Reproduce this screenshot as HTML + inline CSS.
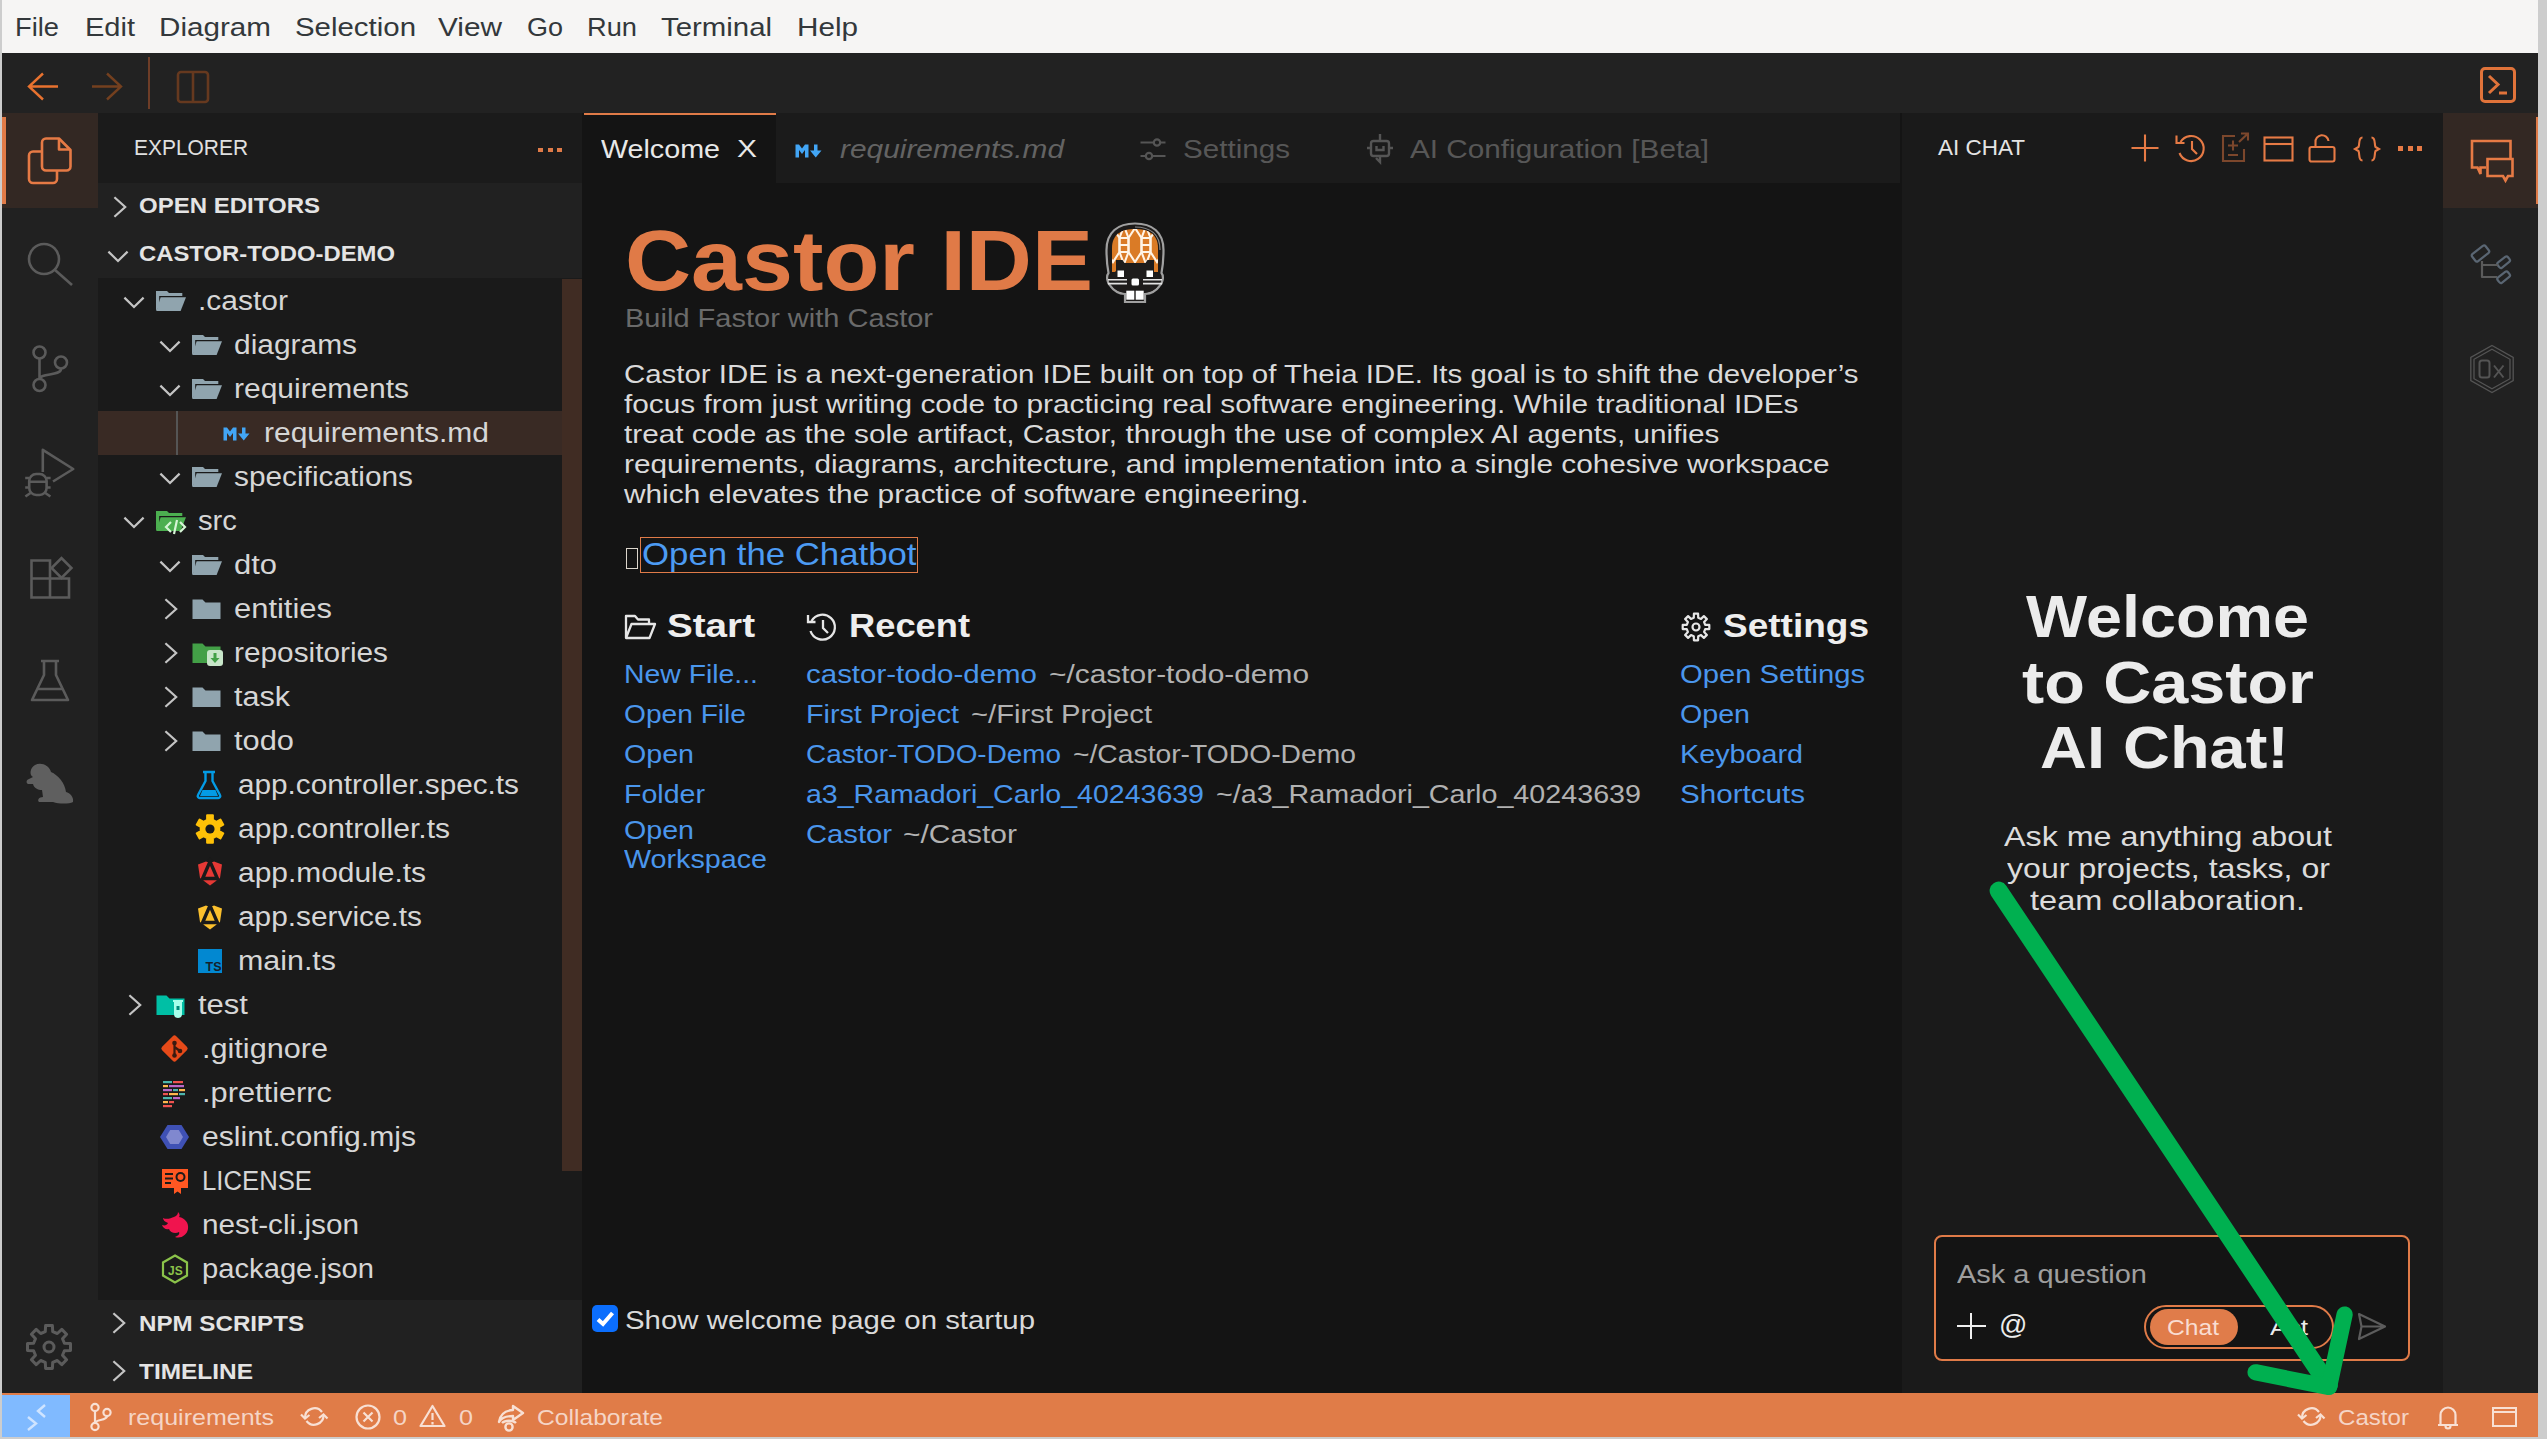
<!DOCTYPE html>
<html><head><meta charset="utf-8"><title>Castor IDE</title>
<style>
html,body{margin:0;padding:0;background:#141414;}
body{width:2547px;height:1439px;position:relative;overflow:hidden;font-family:"Liberation Sans",sans-serif;}
body>div,body>svg,body>span{position:absolute;}
.t{white-space:nowrap;transform-origin:0 50%;display:block;}
svg{overflow:visible;}
</style></head><body>
<div style="left:0px;top:0px;width:2547px;height:1439px;background:#cdcdcd;"></div>
<div style="left:2px;top:0px;width:2536px;height:53px;background:#f6f5f4;"></div>
<div style="left:2px;top:53px;width:2536px;height:60px;background:#222222;"></div>
<div style="left:2px;top:113px;width:96px;height:1280px;background:#212121;"></div>
<div style="left:98px;top:113px;width:484px;height:1280px;background:#1a1a1a;"></div>
<div style="left:582px;top:113px;width:1320px;height:1280px;background:#141414;"></div>
<div style="left:1902px;top:113px;width:541px;height:1280px;background:#1a1a1a;"></div>
<div style="left:2443px;top:113px;width:95px;height:1280px;background:#212121;"></div>
<div style="left:2px;top:1393px;width:2536px;height:44px;background:#e07c48;"></div>
<span class="t" style="left:15px;top:15.01px;font-size:25.5px;line-height:25.5px;color:#33383b;transform:scaleX(1.0707);">File</span>
<span class="t" style="left:85px;top:15.01px;font-size:25.5px;line-height:25.5px;color:#33383b;transform:scaleX(1.1376);">Edit</span>
<span class="t" style="left:159px;top:15.01px;font-size:25.5px;line-height:25.5px;color:#33383b;transform:scaleX(1.1621);">Diagram</span>
<span class="t" style="left:295px;top:15.01px;font-size:25.5px;line-height:25.5px;color:#33383b;transform:scaleX(1.1534);">Selection</span>
<span class="t" style="left:438px;top:15.01px;font-size:25.5px;line-height:25.5px;color:#33383b;transform:scaleX(1.1676);">View</span>
<span class="t" style="left:527px;top:15.01px;font-size:25.5px;line-height:25.5px;color:#33383b;transform:scaleX(1.0579);">Go</span>
<span class="t" style="left:587px;top:15.01px;font-size:25.5px;line-height:25.5px;color:#33383b;transform:scaleX(1.0688);">Run</span>
<span class="t" style="left:661px;top:15.01px;font-size:25.5px;line-height:25.5px;color:#33383b;transform:scaleX(1.1518);">Terminal</span>
<span class="t" style="left:797px;top:15.01px;font-size:25.5px;line-height:25.5px;color:#33383b;transform:scaleX(1.1629);">Help</span>
<svg style="left:26px;top:70px;" width="34" height="32" viewBox="0 0 34 32"><path d="M17 3.5 L3 16.5 L17 29.5 M3.5 16.5 H32" fill="none" stroke="#e8722f" stroke-width="2.4"/></svg>
<svg style="left:90px;top:70px;" width="34" height="32" viewBox="0 0 34 32"><path d="M17 3.5 L31 16.5 L17 29.5 M30.5 16.5 H2" fill="none" stroke="#74401f" stroke-width="2.4"/></svg>
<div style="left:148px;top:57px;width:2px;height:52px;background:#6e3d27;"></div>
<svg style="left:176px;top:70px;" width="34" height="34" viewBox="0 0 34 34"><rect x="2" y="2" width="30" height="30" rx="3" fill="none" stroke="#66391f" stroke-width="2.6"/><path d="M17 2 V32" stroke="#66391f" stroke-width="2.6"/></svg>
<svg style="left:2479px;top:66px;" width="38" height="38" viewBox="0 0 38 38"><rect x="2.5" y="2.5" width="33" height="33" rx="3.5" fill="none" stroke="#e0733a" stroke-width="3"/><path d="M10 10 L19 18.5 L10 27 M20 27 H28" fill="none" stroke="#e0733a" stroke-width="3"/></svg>
<div style="left:2px;top:113px;width:96px;height:95px;background:#332823;"></div>
<div style="left:2px;top:117px;width:4px;height:87px;background:#e07b48;"></div>
<div style="left:2443px;top:113px;width:95px;height:95px;background:#332823;"></div>
<div style="left:2535.5px;top:117px;width:2.5px;height:87px;background:#e07b48;"></div>
<svg style="left:26px;top:135px;" width="48" height="52" viewBox="0 0 48 52"><g fill="none" stroke="#e67a45" stroke-width="2.6" stroke-linejoin="round"><path d="M16 16.5 H7 a4 4 0 0 0 -4 4 V44 a4 4 0 0 0 4 4 H27 a4 4 0 0 0 4 -4 V36"/><path d="M20 3.5 H33 L44.5 15 V31.5 a4 4 0 0 1 -4 4 H20 a4 4 0 0 1 -4 -4 V7.5 a4 4 0 0 1 4 -4 Z"/><path d="M33 4 V14.5 H44"/></g></svg>
<svg style="left:26px;top:241px;" width="48" height="48" viewBox="0 0 48 48"><g fill="none" stroke="#5b5b5b" stroke-width="2.6"><circle cx="18" cy="18" r="15"/><path d="M29 29 L46 44"/></g></svg>
<svg style="left:26px;top:343px;" width="48" height="52" viewBox="0 0 48 52"><g fill="none" stroke="#5b5b5b" stroke-width="2.6"><circle cx="13.5" cy="9.5" r="6"/><circle cx="35" cy="19.5" r="6"/><circle cx="13.5" cy="42" r="6"/><path d="M13.5 16 V36 M35 26 C35 33 14 30 13.5 36"/></g></svg>
<svg style="left:26px;top:448px;" width="50" height="54" viewBox="0 0 50 54"><g fill="none" stroke="#5b5b5b" stroke-width="2.6" stroke-linejoin="round"><path d="M16.8 24 V1.8 L47.2 21 L27 33.5"/><rect x="3.2" y="26" width="17.4" height="21" rx="7"/><path d="M3.2 33.7 H20.6 M-0.8 30 H3.5 M20.4 30 H24.6 M-0.8 39.5 H3.2 M20.6 39.5 H24.6 M-0.6 48.5 L4.5 45 M24.4 48.5 L19.3 45"/></g></svg>
<svg style="left:28px;top:555px;" width="46" height="46" viewBox="0 0 46 46"><g fill="none" stroke="#5b5b5b" stroke-width="2.6"><path d="M3.5 5.5 H22 V23.5 H41 V42.5 H3.5 Z M3.5 23.5 H22 V42.5"/><rect x="26.5" y="6" width="14" height="14" transform="rotate(45 33.5 13)"/></g></svg>
<svg style="left:29px;top:658px;" width="42" height="46" viewBox="0 0 42 46"><g fill="none" stroke="#5b5b5b" stroke-width="2.6" stroke-linejoin="round"><path d="M12 3 H30 M15 3 V17 L3 42 H39 L27 17 V3 M8.5 31 H33.5"/></g></svg>
<svg style="left:25px;top:763px;" width="50" height="42" viewBox="0 0 50 42"><path d="M10 2 C16 -1 24 2 26 9 C33 12 40 20 41 29 C45 30 49 34 48 39 C44 41 34 41 28 39 L14 39 C12 37 14 34 18 34 L17 27 C13 27 9 25 8 21 L3 21 C1 20 1 17 4 16 L8 14 C4 12 5 5 10 2 Z" fill="#5f5f5f"/></svg>
<svg style="left:25px;top:1323px;" width="48" height="48" viewBox="0 0 48 48"><path d="M45.5 20.6 L45.5 27.4 L39.4 27.7 L37.5 32.3 L41.6 36.8 L36.8 41.6 L32.3 37.5 L27.7 39.4 L27.4 45.5 L20.6 45.5 L20.3 39.4 L15.7 37.5 L11.2 41.6 L6.4 36.8 L10.5 32.3 L8.6 27.7 L2.5 27.4 L2.5 20.6 L8.6 20.3 L10.5 15.7 L6.4 11.2 L11.2 6.4 L15.7 10.5 L20.3 8.6 L20.6 2.5 L27.4 2.5 L27.7 8.6 L32.3 10.5 L36.8 6.4 L41.6 11.2 L37.5 15.7 L39.4 20.3 Z" fill="none" stroke="#5b5b5b" stroke-width="3" stroke-linejoin="round"/><circle cx="24" cy="24" r="5" fill="none" stroke="#5b5b5b" stroke-width="3"/></svg>
<svg style="left:2468px;top:137px;" width="50" height="46" viewBox="0 0 50 46"><g fill="none" stroke="#e67a45" stroke-width="2.6" stroke-linejoin="miter"><path d="M42.5 21 V4 H4 V30.5 H9.5 L12.5 37 V30.5 H18"/><path d="M19.5 22 H44.5 V39 H40 L37.5 43.5 L35 39 H19.5 Z"/></g></svg>
<svg style="left:2468px;top:243px;" width="48" height="44" viewBox="0 0 48 44"><g fill="none" stroke="#5a6673" stroke-width="2.2" stroke-linejoin="round"><rect x="4" y="6" width="17" height="9" rx="2" transform="rotate(-38 12.5 10.5)"/><rect x="29" y="16" width="13" height="6.5" rx="2" transform="rotate(-38 35.5 19)"/><rect x="29" y="31" width="13" height="6.5" rx="2" transform="rotate(-38 35.5 34)"/><path d="M14 18 V34 H29 M14 22 H30" stroke="#5b5b5b"/></g></svg>
<svg style="left:2468px;top:344px;" width="48" height="50" viewBox="0 0 48 50"><g fill="none" stroke="#545454" stroke-width="1.3"><path d="M24 1.5 L45.2 13.4 V36.6 L24 48.5 L2.8 36.6 V13.4 Z"/><path d="M24 5.2 L42 15.3 V34.7 L24 44.8 L6 34.7 V15.3 Z"/><rect x="11.5" y="16.5" width="10" height="17" rx="2.5" stroke-width="2"/><path d="M26 21.5 L35.5 33.5 M35.5 21.5 L26 33.5" stroke-width="2"/></g></svg>
<div style="left:98px;top:113px;width:484px;height:70px;background:#1b1b1b;"></div>
<span class="t" style="left:134px;top:137.05px;font-size:22.5px;line-height:22.5px;color:#e0e0e0;transform:scaleX(0.9303);">EXPLORER</span>
<div style="left:538.0px;top:148px;width:5px;height:4px;background:#e07b48;"></div>
<div style="left:547.5px;top:148px;width:5px;height:4px;background:#e07b48;"></div>
<div style="left:557.0px;top:148px;width:5px;height:4px;background:#e07b48;"></div>
<div style="left:98px;top:183px;width:484px;height:95px;background:#212121;"></div>
<span class="t" style="left:138.5px;top:195.48px;font-size:22px;line-height:22px;color:#e4e4e4;font-weight:bold;transform:scaleX(1.0913);">OPEN EDITORS</span>
<span class="t" style="left:138.5px;top:242.98px;font-size:22px;line-height:22px;color:#e4e4e4;font-weight:bold;transform:scaleX(1.0834);">CASTOR-TODO-DEMO</span>
<svg style="left:111px;top:194px;" width="18" height="26" viewBox="0 0 18 26"><path d="M3.4 3.2 L14.2 13 L3.4 22.8" fill="none" stroke="#c4c4c4" stroke-width="2.2"/></svg>
<svg style="left:105px;top:248px;" width="26" height="18" viewBox="0 0 26 18"><path d="M3.4 3.6 L13 13 L22.6 3.6" fill="none" stroke="#c4c4c4" stroke-width="2.2"/></svg>
<div style="left:98px;top:1300px;width:484px;height:93px;background:#212121;"></div>
<span class="t" style="left:138.5px;top:1313.48px;font-size:22px;line-height:22px;color:#e4e4e4;font-weight:bold;transform:scaleX(1.0974);">NPM SCRIPTS</span>
<span class="t" style="left:138.5px;top:1361.48px;font-size:22px;line-height:22px;color:#e4e4e4;font-weight:bold;transform:scaleX(1.1103);">TIMELINE</span>
<svg style="left:110px;top:1310px;" width="18" height="26" viewBox="0 0 18 26"><path d="M3.4 3.2 L14.2 13 L3.4 22.8" fill="none" stroke="#c4c4c4" stroke-width="2.2"/></svg>
<svg style="left:110px;top:1358px;" width="18" height="26" viewBox="0 0 18 26"><path d="M3.4 3.2 L14.2 13 L3.4 22.8" fill="none" stroke="#c4c4c4" stroke-width="2.2"/></svg>
<div style="left:98px;top:411px;width:464px;height:44px;background:#392a24;"></div>
<div style="left:562px;top:279px;width:20px;height:892px;background:#402c23;"></div>
<div style="left:176px;top:411px;width:2px;height:44px;background:#555555;"></div>
<span class="t" style="left:198px;top:287.94px;font-size:27px;line-height:27px;color:#d6d6d6;transform:scaleX(1.1107);">.castor</span>
<svg style="left:121px;top:294px;" width="26" height="18" viewBox="0 0 26 18"><path d="M3.4 3.6 L13 13 L22.6 3.6" fill="none" stroke="#c4c4c4" stroke-width="2.2"/></svg>
<svg style="left:156px;top:285px;" width="32" height="32" viewBox="0 0 32 32"><path d="M0 6 H11 L13 8 H26.3 V11 H3.2 V21 L0 26 Z" fill="#90a4ae"/><path d="M4.6 12.2 H30 L24.6 26 H0.4 Z" fill="#90a4ae"/></svg>
<span class="t" style="left:234px;top:331.94px;font-size:27px;line-height:27px;color:#d6d6d6;transform:scaleX(1.1076);">diagrams</span>
<svg style="left:157px;top:338px;" width="26" height="18" viewBox="0 0 26 18"><path d="M3.4 3.6 L13 13 L22.6 3.6" fill="none" stroke="#c4c4c4" stroke-width="2.2"/></svg>
<svg style="left:192px;top:329px;" width="32" height="32" viewBox="0 0 32 32"><path d="M0 6 H11 L13 8 H26.3 V11 H3.2 V21 L0 26 Z" fill="#90a4ae"/><path d="M4.6 12.2 H30 L24.6 26 H0.4 Z" fill="#90a4ae"/></svg>
<span class="t" style="left:234px;top:375.94px;font-size:27px;line-height:27px;color:#d6d6d6;transform:scaleX(1.1106);">requirements</span>
<svg style="left:157px;top:382px;" width="26" height="18" viewBox="0 0 26 18"><path d="M3.4 3.6 L13 13 L22.6 3.6" fill="none" stroke="#c4c4c4" stroke-width="2.2"/></svg>
<svg style="left:192px;top:373px;" width="32" height="32" viewBox="0 0 32 32"><path d="M0 6 H11 L13 8 H26.3 V11 H3.2 V21 L0 26 Z" fill="#90a4ae"/><path d="M4.6 12.2 H30 L24.6 26 H0.4 Z" fill="#90a4ae"/></svg>
<span class="t" style="left:264px;top:419.94px;font-size:27px;line-height:27px;color:#d6d6d6;transform:scaleX(1.1106);">requirements.md</span>
<svg style="left:222px;top:417px;" width="32" height="32" viewBox="0 0 32 32"><path d="M1.5 23.5 V10.5 H5 L8 14.5 L11 10.5 H14.5 V23.5 H11 V16 L8 20 L5 16 V23.5 Z" fill="#42a5f5"/><path d="M20 10.5 H23.5 V16.5 H27.5 L21.75 23.5 L16 16.5 H20 Z" fill="#42a5f5"/></svg>
<span class="t" style="left:234px;top:463.94px;font-size:27px;line-height:27px;color:#d6d6d6;transform:scaleX(1.1043);">specifications</span>
<svg style="left:157px;top:470px;" width="26" height="18" viewBox="0 0 26 18"><path d="M3.4 3.6 L13 13 L22.6 3.6" fill="none" stroke="#c4c4c4" stroke-width="2.2"/></svg>
<svg style="left:192px;top:461px;" width="32" height="32" viewBox="0 0 32 32"><path d="M0 6 H11 L13 8 H26.3 V11 H3.2 V21 L0 26 Z" fill="#90a4ae"/><path d="M4.6 12.2 H30 L24.6 26 H0.4 Z" fill="#90a4ae"/></svg>
<span class="t" style="left:198px;top:507.94px;font-size:27px;line-height:27px;color:#d6d6d6;transform:scaleX(1.0833);">src</span>
<svg style="left:121px;top:514px;" width="26" height="18" viewBox="0 0 26 18"><path d="M3.4 3.6 L13 13 L22.6 3.6" fill="none" stroke="#c4c4c4" stroke-width="2.2"/></svg>
<svg style="left:156px;top:505px;" width="32" height="32" viewBox="0 0 32 32"><path d="M0 6 H11 L13 8 H26.3 V11 H3.2 V21 L0 26 Z" fill="#4caf50"/><path d="M4.6 12.2 H30 L24.6 26 H0.4 Z" fill="#4caf50"/><path d="M15 17 L10 22 L15 27 M24 17 L29 22 L24 27 M21 15 L18 29" fill="none" stroke="#d6f5d6" stroke-width="2.2"/></svg>
<span class="t" style="left:234px;top:551.94px;font-size:27px;line-height:27px;color:#d6d6d6;transform:scaleX(1.1452);">dto</span>
<svg style="left:157px;top:558px;" width="26" height="18" viewBox="0 0 26 18"><path d="M3.4 3.6 L13 13 L22.6 3.6" fill="none" stroke="#c4c4c4" stroke-width="2.2"/></svg>
<svg style="left:192px;top:549px;" width="32" height="32" viewBox="0 0 32 32"><path d="M0 6 H11 L13 8 H26.3 V11 H3.2 V21 L0 26 Z" fill="#90a4ae"/><path d="M4.6 12.2 H30 L24.6 26 H0.4 Z" fill="#90a4ae"/></svg>
<span class="t" style="left:234px;top:595.94px;font-size:27px;line-height:27px;color:#d6d6d6;transform:scaleX(1.1454);">entities</span>
<svg style="left:162px;top:596px;" width="18" height="26" viewBox="0 0 18 26"><path d="M3.4 3.2 L14.2 13 L3.4 22.8" fill="none" stroke="#c4c4c4" stroke-width="2.2"/></svg>
<svg style="left:192px;top:593px;" width="32" height="32" viewBox="0 0 32 32"><path d="M0.5 6.5 H10.5 L13.5 9.5 H28.5 V26 H0.5 Z" fill="#90a4ae"/></svg>
<span class="t" style="left:234px;top:639.94px;font-size:27px;line-height:27px;color:#d6d6d6;transform:scaleX(1.1034);">repositories</span>
<svg style="left:162px;top:640px;" width="18" height="26" viewBox="0 0 18 26"><path d="M3.4 3.2 L14.2 13 L3.4 22.8" fill="none" stroke="#c4c4c4" stroke-width="2.2"/></svg>
<svg style="left:192px;top:637px;" width="32" height="32" viewBox="0 0 32 32"><path d="M0.5 6.5 H10.5 L13.5 9.5 H28.5 V26 H0.5 Z" fill="#43a047"/><rect x="15" y="13" width="16" height="16" rx="3" fill="#c8e6c9"/><path d="M21.5 16 h3 v5 h3 l-4.5 5 l-4.5 -5 h3 Z" fill="#43a047"/></svg>
<span class="t" style="left:234px;top:683.94px;font-size:27px;line-height:27px;color:#d6d6d6;transform:scaleX(1.1306);">task</span>
<svg style="left:162px;top:684px;" width="18" height="26" viewBox="0 0 18 26"><path d="M3.4 3.2 L14.2 13 L3.4 22.8" fill="none" stroke="#c4c4c4" stroke-width="2.2"/></svg>
<svg style="left:192px;top:681px;" width="32" height="32" viewBox="0 0 32 32"><path d="M0.5 6.5 H10.5 L13.5 9.5 H28.5 V26 H0.5 Z" fill="#90a4ae"/></svg>
<span class="t" style="left:234px;top:727.94px;font-size:27px;line-height:27px;color:#d6d6d6;transform:scaleX(1.1415);">todo</span>
<svg style="left:162px;top:728px;" width="18" height="26" viewBox="0 0 18 26"><path d="M3.4 3.2 L14.2 13 L3.4 22.8" fill="none" stroke="#c4c4c4" stroke-width="2.2"/></svg>
<svg style="left:192px;top:725px;" width="32" height="32" viewBox="0 0 32 32"><path d="M0.5 6.5 H10.5 L13.5 9.5 H28.5 V26 H0.5 Z" fill="#90a4ae"/></svg>
<span class="t" style="left:238px;top:771.94px;font-size:27px;line-height:27px;color:#d6d6d6;transform:scaleX(1.1013);">app.controller.spec.ts</span>
<svg style="left:194px;top:769px;" width="32" height="32" viewBox="0 0 32 32"><path d="M9 3 H21 M11.5 3 V12 L4 26 a2 2 0 0 0 2 3 H24 a2 2 0 0 0 2 -3 L18.5 12 V3" fill="none" stroke="#039be5" stroke-width="2.4" stroke-linejoin="round"/><path d="M8.5 21 H21.5 L24 27 H6 Z" fill="#039be5"/></svg>
<span class="t" style="left:238px;top:815.94px;font-size:27px;line-height:27px;color:#d6d6d6;transform:scaleX(1.1122);">app.controller.ts</span>
<svg style="left:194px;top:813px;" width="32" height="32" viewBox="0 0 32 32"><path d="M18.9 29.7 L13.1 29.7 L13.1 25.0 L9.6 23.1 L5.6 25.4 L2.7 20.3 L6.7 18.0 L6.7 14.0 L2.7 11.7 L5.6 6.6 L9.6 8.9 L13.1 7.0 L13.1 2.3 L18.9 2.3 L18.9 7.0 L22.4 8.9 L26.4 6.6 L29.3 11.7 L25.3 14.0 L25.3 18.0 L29.3 20.3 L26.4 25.4 L22.4 23.1 L18.9 25.0 Z" fill="#ffc107" stroke="#ffc107" stroke-width="2" stroke-linejoin="round"/><circle cx="16" cy="16" r="4.6" fill="#1a1a1a"/></svg>
<span class="t" style="left:238px;top:859.94px;font-size:27px;line-height:27px;color:#d6d6d6;transform:scaleX(1.1084);">app.module.ts</span>
<svg style="left:194px;top:857px;" width="32" height="32" viewBox="0 0 32 32"><path d="M16 3 L28 7.5 L26 21 L16 28.5 L6 21 L4 7.5 Z" fill="#e53935"/><path d="M8 23 L16 4.5 L24 23 M9 21.5 H23" fill="none" stroke="#1a1a1a" stroke-width="3.4" stroke-linejoin="miter"/><path d="M16 0 L12 5 H20 Z" fill="#1a1a1a"/></svg>
<span class="t" style="left:238px;top:903.94px;font-size:27px;line-height:27px;color:#d6d6d6;transform:scaleX(1.1046);">app.service.ts</span>
<svg style="left:194px;top:901px;" width="32" height="32" viewBox="0 0 32 32"><path d="M16 3 L28 7.5 L26 21 L16 28.5 L6 21 L4 7.5 Z" fill="#fbc02d"/><path d="M8 23 L16 4.5 L24 23 M9 21.5 H23" fill="none" stroke="#1a1a1a" stroke-width="3.4" stroke-linejoin="miter"/><path d="M16 0 L12 5 H20 Z" fill="#1a1a1a"/></svg>
<span class="t" style="left:238px;top:947.94px;font-size:27px;line-height:27px;color:#d6d6d6;transform:scaleX(1.1260);">main.ts</span>
<svg style="left:194px;top:945px;" width="32" height="32" viewBox="0 0 32 32"><rect x="4" y="4" width="24" height="24" fill="#0288d1"/><text x="11.5" y="26" font-size="12.5" font-weight="bold" fill="#15202b" font-family="Liberation Sans">TS</text></svg>
<span class="t" style="left:198px;top:991.94px;font-size:27px;line-height:27px;color:#d6d6d6;transform:scaleX(1.1486);">test</span>
<svg style="left:126px;top:992px;" width="18" height="26" viewBox="0 0 18 26"><path d="M3.4 3.2 L14.2 13 L3.4 22.8" fill="none" stroke="#c4c4c4" stroke-width="2.2"/></svg>
<svg style="left:156px;top:989px;" width="32" height="32" viewBox="0 0 32 32"><path d="M0.5 6.5 H10.5 L13.5 9.5 H28.5 V26 H0.5 Z" fill="#00bfa5"/><path d="M17 12 H27 M19 12 V25 a3 3 0 0 0 6 0 V12" fill="#a7ffeb" stroke="#a7ffeb" stroke-width="2"/><rect x="20.5" y="17" width="3" height="4" fill="#00897b"/></svg>
<span class="t" style="left:202px;top:1035.94px;font-size:27px;line-height:27px;color:#d6d6d6;transform:scaleX(1.1343);">.gitignore</span>
<svg style="left:159px;top:1033px;" width="32" height="32" viewBox="0 0 32 32"><rect x="5.5" y="5.5" width="20" height="20" rx="2.5" transform="rotate(45 15.5 15.5)" fill="#e64a19"/><path d="M15.5 9 V23 M15.5 14 L21 18" stroke="#3a1a10" stroke-width="2.2" fill="none"/><circle cx="15.5" cy="22.5" r="2.3" fill="#3a1a10"/><circle cx="21" cy="18" r="2.3" fill="#3a1a10"/><circle cx="15.5" cy="10" r="2.3" fill="#3a1a10"/></svg>
<span class="t" style="left:202px;top:1079.94px;font-size:27px;line-height:27px;color:#d6d6d6;transform:scaleX(1.1400);">.prettierrc</span>
<svg style="left:159px;top:1077px;" width="32" height="32" viewBox="0 0 32 32"><rect x="4" y="4" width="9" height="2.2" fill="#4db6ac"/><rect x="14" y="4" width="10" height="2.2" fill="#ef5350"/><rect x="4" y="8" width="5" height="2.2" fill="#ffb74d"/><rect x="10" y="8" width="15" height="2.2" fill="#ba68c8"/><rect x="4" y="12" width="9" height="2.2" fill="#ba68c8"/><rect x="14" y="12" width="5" height="2.2" fill="#4db6ac"/><rect x="20" y="12" width="6" height="2.2" fill="#ffb74d"/><rect x="4" y="16" width="5" height="2.2" fill="#ef5350"/><rect x="10" y="16" width="9" height="2.2" fill="#ffb74d"/><rect x="20" y="16" width="6" height="2.2" fill="#4db6ac"/><rect x="4" y="20" width="9" height="2.2" fill="#4db6ac"/><rect x="14" y="20" width="7" height="2.2" fill="#ba68c8"/><rect x="4" y="24" width="5" height="2.2" fill="#ffb74d"/><rect x="10" y="24" width="5" height="2.2" fill="#ef5350"/><rect x="4" y="28" width="9" height="2.2" fill="#ef5350"/></svg>
<span class="t" style="left:202px;top:1123.94px;font-size:27px;line-height:27px;color:#d6d6d6;transform:scaleX(1.1141);">eslint.config.mjs</span>
<svg style="left:159px;top:1121px;" width="32" height="32" viewBox="0 0 32 32"><path d="M1 16 L8.5 4 H22.5 L30 16 L22.5 28 H8.5 Z" fill="#3f51b5"/><path d="M7 16 L11.2 9 H19.8 L24 16 L19.8 23 H11.2 Z" fill="#8088cf"/></svg>
<span class="t" style="left:202px;top:1167.94px;font-size:27px;line-height:27px;color:#d6d6d6;transform:scaleX(0.9520);">LICENSE</span>
<svg style="left:159px;top:1165px;" width="32" height="32" viewBox="0 0 32 32"><path d="M3 4 H29 V23 H22 V29 L18.5 26.5 L15 29 V23 H3 Z" fill="#ff5722"/><circle cx="21.5" cy="12" r="5" fill="#1a1a1a"/><circle cx="21.5" cy="12" r="3" fill="#ff5722"/><path d="M6 9 H14 M6 13.5 H14 M6 18 H12" stroke="#1a1a1a" stroke-width="2"/></svg>
<span class="t" style="left:202px;top:1211.94px;font-size:27px;line-height:27px;color:#d6d6d6;transform:scaleX(1.1013);">nest-cli.json</span>
<svg style="left:159px;top:1209px;" width="32" height="32" viewBox="0 0 32 32"><path d="M19 3 C21 5 21 7 20 8 C26 9 30 14 29 20 C28 26 22 30 16 28 C19 27 21 25 20 23 C17 25 11 24 10 20 C7 21 4 19 3 16 C6 17 8 16 9 14 C6 13 4 11 4 9 C8 11 12 9 15 8 C17 7 19 6 19 3 Z" fill="#f0144e"/></svg>
<span class="t" style="left:202px;top:1255.94px;font-size:27px;line-height:27px;color:#d6d6d6;transform:scaleX(1.0809);">package.json</span>
<svg style="left:159px;top:1253px;" width="32" height="32" viewBox="0 0 32 32"><path d="M16 2.5 L28 9.5 V22.5 L16 29.5 L4 22.5 V9.5 Z" fill="none" stroke="#8bc34a" stroke-width="2.2"/><text x="9" y="21.5" font-size="12" font-weight="bold" fill="#8bc34a" font-family="Liberation Sans">JS</text></svg>
<div style="left:582px;top:113px;width:1320px;height:70px;background:#1b1b1b;"></div>
<div style="left:582px;top:113px;width:194px;height:70px;background:#141414;"></div>
<div style="left:584px;top:113px;width:192px;height:2px;background:#e07b48;"></div>
<span class="t" style="left:600.5px;top:136.51px;font-size:25.5px;line-height:25.5px;color:#e8e8e8;transform:scaleX(1.1246);">Welcome</span>
<span class="t" style="left:737px;top:137.71px;font-size:23.5px;line-height:23.5px;color:#e8e8e8;transform:scaleX(1.2749);">X</span>
<svg style="left:794px;top:134px;" width="32" height="32" viewBox="0 0 32 32"><path d="M1.5 23.5 V10.5 H5 L8 14.5 L11 10.5 H14.5 V23.5 H11 V16 L8 20 L5 16 V23.5 Z" fill="#42a5f5"/><path d="M20 10.5 H23.5 V16.5 H27.5 L21.75 23.5 L16 16.5 H20 Z" fill="#42a5f5"/></svg>
<span class="t" style="left:840px;top:135.59px;font-size:26px;line-height:26px;color:#636363;font-style:italic;transform:scaleX(1.1483);">requirements.md</span>
<svg style="left:1139px;top:137px;" width="28" height="26" viewBox="0 0 28 26"><g fill="none" stroke="#555555" stroke-width="2.2"><path d="M1.5 5.5 H14.5 M21.5 5.5 H26.5 M1.5 19 H6.5 M13.5 19 H26.5"/><circle cx="18" cy="5.5" r="3.2"/><circle cx="10" cy="19" r="3.2"/></g></svg>
<svg style="left:1366px;top:133px;" width="28" height="32" viewBox="0 0 28 32"><g fill="none" stroke="#555555" stroke-width="2.4"><path d="M14 1 V8 M1 15 H5 M23 15 H27 M14 23 V29 L10 25"/><rect x="5" y="8" width="18" height="15" rx="2.5"/><path d="M10.5 13 V17 H17.5 V13"/></g></svg>
<span class="t" style="left:1183px;top:136.09px;font-size:26px;line-height:26px;color:#575757;transform:scaleX(1.1389);">Settings</span>
<span class="t" style="left:1410px;top:136.09px;font-size:26px;line-height:26px;color:#575757;transform:scaleX(1.1429);">AI Configuration [Beta]</span>
<div style="left:1900px;top:113px;width:2px;height:1280px;background:#141414;"></div>
<span class="t" style="left:625px;top:217.72px;font-size:85.5px;line-height:85.5px;color:#e07a47;font-weight:bold;transform:scaleX(1.0707);">Castor IDE</span>
<svg style="left:1103px;top:222px;" width="64" height="82" viewBox="0 0 64 82"><defs><clipPath id="dome"><path d="M9 50 V26 C9 12 19 7 32 7 C45 7 55 12 55 26 V50 Z"/></clipPath></defs><path d="M32 1.5 C49 1.5 60.5 10 60.5 28 C60.5 36 59.5 46 58.5 51 C61 54 60 61 56.5 64 C53 69 48 71.5 42 72 V80 H22 V72 C16 71.5 11 69 7.5 64 C4 61 3 54 5.5 51 C4.5 46 3.5 36 3.5 28 C3.5 10 15 1.5 32 1.5 Z" fill="#1c1a19" stroke="#a0a0a0" stroke-width="2.2"/><path d="M32 5 C47 5 57 12 57 28" fill="none" stroke="#8a8a8a" stroke-width="1.2"/><g clip-path="url(#dome)"><rect x="0" y="0" width="64" height="52" fill="#da7b26"/><g fill="none" stroke="#fff4e6" stroke-width="2.1"><path d="M10 6 L16.5 16 V30 L10 40 L3.5 30 V16 Z"/><path d="M32 6 L38.5 16 V30 L32 40 L25.5 30 V16 Z"/><path d="M54 6 L60.5 16 V30 L54 40 L47.5 30 V16 Z"/><path d="M16.5 16 H25.5 M16.5 23 H25.5 M16.5 30 H25.5 M21 4 L16.5 16 M21 4 L25.5 16 M16.5 30 L21 42 L25.5 30 M16.5 16 V30 M25.5 16 V30"/><path d="M38.5 16 H47.5 M38.5 23 H47.5 M38.5 30 H47.5 M43 4 L38.5 16 M43 4 L47.5 16 M38.5 30 L43 42 L47.5 30 M38.5 16 V30 M47.5 16 V30"/></g></g><path d="M13 51 V38 H19.5 L21.5 41 H42.5 L44.5 38 H51 V51 C58 53 58 61 54 65 C50 70 44 71 32 71 C20 71 14 70 10 65 C6 61 6 53 13 49 Z" fill="#1e1c1b"/><rect x="14.5" y="48.5" width="6.5" height="6.5" fill="#ffffff"/><rect x="43.5" y="48.5" width="6.5" height="6.5" fill="#ffffff"/><rect x="28.5" y="56.5" width="7.5" height="7" rx="1.5" fill="#ffffff"/><path d="M5 57.8 H24 M5 61.6 H24 M40 57.8 H59 M40 61.6 H59" stroke="#e4e4e4" stroke-width="1.6"/><rect x="23.3" y="68.7" width="8" height="9" fill="#ffffff"/><rect x="32.7" y="68.7" width="8" height="9" fill="#ffffff"/></svg>
<span class="t" style="left:625px;top:304.59px;font-size:26px;line-height:26px;color:#6a6a6a;transform:scaleX(1.1160);">Build Fastor with Castor</span>
<span class="t" style="left:624.3px;top:360.79px;font-size:26px;line-height:26px;color:#dadada;transform:scaleX(1.1314);">Castor IDE is a next-generation IDE built on top of Theia IDE. Its goal is to shift the developer’s</span>
<span class="t" style="left:624.3px;top:390.84px;font-size:26px;line-height:26px;color:#dadada;transform:scaleX(1.1463);">focus from just writing code to practicing real software engineering. While traditional IDEs</span>
<span class="t" style="left:624.3px;top:420.89px;font-size:26px;line-height:26px;color:#dadada;transform:scaleX(1.1450);">treat code as the sole artifact, Castor, through the use of complex AI agents, unifies</span>
<span class="t" style="left:624.3px;top:450.94px;font-size:26px;line-height:26px;color:#dadada;transform:scaleX(1.1458);">requirements, diagrams, architecture, and implementation into a single cohesive workspace</span>
<span class="t" style="left:624.3px;top:480.99px;font-size:26px;line-height:26px;color:#dadada;transform:scaleX(1.1467);">which elevates the practice of software engineering.</span>
<div style="left:625.5px;top:547.5px;width:12.5px;height:21px;background:transparent;border:1.5px solid #dcd6cc;box-sizing:border-box;"></div>
<div style="left:639.7px;top:537px;width:278.6px;height:36px;background:transparent;border:1.6px solid #e07b48;box-sizing:border-box;"></div>
<span class="t" style="left:641.5px;top:538.94px;font-size:31.5px;line-height:31.5px;color:#4c9bf3;transform:scaleX(1.1038);">Open the Chatbot</span>
<svg style="left:624px;top:613px;" width="32" height="28" viewBox="0 0 32 28"><path d="M2 25 V3 H11 L14 6.5 H25 V11 M2 25 L7.5 11 H31 L25.5 25 Z" fill="none" stroke="#e6e6e6" stroke-width="2.3" stroke-linejoin="round"/></svg>
<svg style="left:806px;top:612px;" width="32" height="30" viewBox="0 0 32 30"><g fill="none" stroke="#e6e6e6" stroke-width="2.3"><path d="M5.5 9 A12.5 12.5 0 1 1 4.5 19"/><path d="M2 3 V10 H9.5 M17 8 V16 L22 21"/></g></svg>
<svg style="left:1681px;top:612px;" width="30" height="30" viewBox="0 0 30 30"><path d="M28.3 12.9 L28.3 17.1 L24.2 17.2 L23.1 20.0 L25.9 22.9 L22.9 25.9 L20.0 23.1 L17.2 24.2 L17.1 28.3 L12.9 28.3 L12.8 24.2 L10.0 23.1 L7.1 25.9 L4.1 22.9 L6.9 20.0 L5.8 17.2 L1.7 17.1 L1.7 12.9 L5.8 12.8 L6.9 10.0 L4.1 7.1 L7.1 4.1 L10.0 6.9 L12.8 5.8 L12.9 1.7 L17.1 1.7 L17.2 5.8 L20.0 6.9 L22.9 4.1 L25.9 7.1 L23.1 10.0 L24.2 12.8 Z" fill="none" stroke="#e6e6e6" stroke-width="2.2" stroke-linejoin="round"/><circle cx="15" cy="15" r="3.5" fill="none" stroke="#e6e6e6" stroke-width="2.2"/></svg>
<span class="t" style="left:667px;top:609.24px;font-size:33.5px;line-height:33.5px;color:#eeeeee;font-weight:bold;transform:scaleX(1.1529);">Start</span>
<span class="t" style="left:849px;top:609.24px;font-size:33.5px;line-height:33.5px;color:#eeeeee;font-weight:bold;transform:scaleX(1.0831);">Recent</span>
<span class="t" style="left:1723px;top:609.24px;font-size:33.5px;line-height:33.5px;color:#eeeeee;font-weight:bold;transform:scaleX(1.1048);">Settings</span>
<span class="t" style="left:624px;top:660.59px;font-size:26px;line-height:26px;color:#4a96ec;transform:scaleX(1.0911);">New File...</span>
<span class="t" style="left:624px;top:700.59px;font-size:26px;line-height:26px;color:#4a96ec;transform:scaleX(1.0822);">Open File</span>
<span class="t" style="left:624px;top:740.59px;font-size:26px;line-height:26px;color:#4a96ec;transform:scaleX(1.1005);">Open</span>
<span class="t" style="left:624px;top:780.59px;font-size:26px;line-height:26px;color:#4a96ec;transform:scaleX(1.0990);">Folder</span>
<span class="t" style="left:624px;top:816.79px;font-size:26px;line-height:26px;color:#4a96ec;transform:scaleX(1.1005);">Open</span>
<span class="t" style="left:624px;top:846.39px;font-size:26px;line-height:26px;color:#4a96ec;transform:scaleX(1.1036);">Workspace</span>
<span class="t" style="left:806px;top:660.59px;font-size:26px;line-height:26px;color:#4a96ec;transform:scaleX(1.1337);">castor-todo-demo</span>
<span class="t" style="left:1049px;top:660.59px;font-size:26px;line-height:26px;color:#b2b2b2;transform:scaleX(1.1496);">~/castor-todo-demo</span>
<span class="t" style="left:806px;top:700.59px;font-size:26px;line-height:26px;color:#4a96ec;transform:scaleX(1.1032);">First Project</span>
<span class="t" style="left:971px;top:700.59px;font-size:26px;line-height:26px;color:#b2b2b2;transform:scaleX(1.1236);">~/First Project</span>
<span class="t" style="left:806px;top:740.59px;font-size:26px;line-height:26px;color:#4a96ec;transform:scaleX(1.0719);">Castor-TODO-Demo</span>
<span class="t" style="left:1073px;top:740.59px;font-size:26px;line-height:26px;color:#b2b2b2;transform:scaleX(1.0872);">~/Castor-TODO-Demo</span>
<span class="t" style="left:806px;top:780.59px;font-size:26px;line-height:26px;color:#4a96ec;transform:scaleX(1.0969);">a3_Ramadori_Carlo_40243639</span>
<span class="t" style="left:1216px;top:780.59px;font-size:26px;line-height:26px;color:#b2b2b2;transform:scaleX(1.1032);">~/a3_Ramadori_Carlo_40243639</span>
<span class="t" style="left:806px;top:820.99px;font-size:26px;line-height:26px;color:#4a96ec;transform:scaleX(1.1230);">Castor</span>
<span class="t" style="left:903px;top:820.99px;font-size:26px;line-height:26px;color:#b2b2b2;transform:scaleX(1.1515);">~/Castor</span>
<span class="t" style="left:1680px;top:660.59px;font-size:26px;line-height:26px;color:#4a96ec;transform:scaleX(1.1227);">Open Settings</span>
<span class="t" style="left:1680px;top:700.59px;font-size:26px;line-height:26px;color:#4a96ec;transform:scaleX(1.1005);">Open</span>
<span class="t" style="left:1680px;top:740.59px;font-size:26px;line-height:26px;color:#4a96ec;transform:scaleX(1.1050);">Keyboard</span>
<span class="t" style="left:1680px;top:780.59px;font-size:26px;line-height:26px;color:#4a96ec;transform:scaleX(1.1381);">Shortcuts</span>
<div style="left:592.3px;top:1305px;width:26px;height:27px;background:#0b6efd;border-radius:5px;"></div>
<svg style="left:592.3px;top:1305px;" width="26" height="27" viewBox="0 0 26 27"><path d="M6 14.5 L11 19 L20.5 8" fill="none" stroke="#fff" stroke-width="4"/></svg>
<span class="t" style="left:625px;top:1306.89px;font-size:26px;line-height:26px;color:#dadada;transform:scaleX(1.1302);">Show welcome page on startup</span>
<span class="t" style="left:1938px;top:136.55px;font-size:22.5px;line-height:22.5px;color:#e4e4e4;">AI CHAT</span>
<svg style="left:2131px;top:134px;" width="28" height="28" viewBox="0 0 28 28"><path d="M14 0.5 V27.5 M0.5 14 H27.5" stroke="#e67a45" stroke-width="2.1"/></svg>
<svg style="left:2174px;top:133px;" width="32" height="30" viewBox="0 0 32 30"><g fill="none" stroke="#e67a45" stroke-width="2.1"><path d="M6.5 9 A12.5 12.5 0 1 1 5.5 20"/><path d="M2.5 2.5 V10 H10.5 M18 8 V16 L23 21"/></g></svg>
<svg style="left:2220px;top:132px;" width="30" height="31" viewBox="0 0 30 31"><g fill="none" stroke="#7c472c" stroke-width="2.1"><path d="M15 4 H3 V29 H24 V17 M8 13.5 H18 M13 8.5 V18.5 M8 23 H18 M19 10 L28 1.5 M21 1.5 H28 V8.5"/></g></svg>
<svg style="left:2262px;top:135px;" width="33" height="28" viewBox="0 0 33 28"><g fill="none" stroke="#e67a45" stroke-width="2.1"><rect x="2.5" y="2.5" width="28" height="23"/><path d="M2.5 9 H30.5"/></g></svg>
<svg style="left:2308px;top:133px;" width="28" height="30" viewBox="0 0 28 30"><g fill="none" stroke="#e67a45" stroke-width="2.1"><rect x="1.5" y="14" width="25" height="14.5" rx="2"/><path d="M7.5 14 V9.5 A6.5 6.5 0 0 1 20.5 8"/></g></svg>
<svg style="left:2353px;top:136px;" width="28" height="26" viewBox="0 0 28 26"><g fill="none" stroke="#e67a45" stroke-width="2.1"><path d="M9.5 1.5 C5 1.5 7 8 5.5 11 L2 13 L5.5 15 C7 18 5 24.5 9.5 24.5 M18.5 1.5 C23 1.5 21 8 22.5 11 L26 13 L22.5 15 C21 18 23 24.5 18.5 24.5"/></g></svg>
<div style="left:2398.0px;top:146px;width:5px;height:4.5px;background:#e67a45;"></div>
<div style="left:2407.5px;top:146px;width:5px;height:4.5px;background:#e67a45;"></div>
<div style="left:2417.0px;top:146px;width:5px;height:4.5px;background:#e67a45;"></div>
<span class="t" style="left:2026px;top:587.66px;font-size:59px;line-height:59px;color:#ececec;font-weight:bold;transform:scaleX(1.0971);">Welcome</span>
<span class="t" style="left:2022px;top:653.66px;font-size:59px;line-height:59px;color:#ececec;font-weight:bold;transform:scaleX(1.1275);">to Castor</span>
<span class="t" style="left:2040px;top:719.16px;font-size:59px;line-height:59px;color:#ececec;font-weight:bold;transform:scaleX(1.1010);">AI Chat!</span>
<span class="t" style="left:2004px;top:822.90px;font-size:28px;line-height:28px;color:#dcdcdc;transform:scaleX(1.1515);">Ask me anything about</span>
<span class="t" style="left:2007px;top:854.90px;font-size:28px;line-height:28px;color:#dcdcdc;transform:scaleX(1.1468);">your projects, tasks, or</span>
<span class="t" style="left:2030px;top:886.90px;font-size:28px;line-height:28px;color:#dcdcdc;transform:scaleX(1.1624);">team collaboration.</span>
<div style="left:1934.3px;top:1234.8px;width:476px;height:126px;background:#141414;border:2.4px solid #e07b48;border-radius:8px;box-sizing:border-box;"></div>
<span class="t" style="left:1956.5px;top:1262.44px;font-size:25px;line-height:25px;color:#9e9e9e;transform:scaleX(1.1585);">Ask a question</span>
<div style="left:1956.5px;top:1324.8px;width:29.5px;height:2.4px;background:#f0f0f0;"></div>
<div style="left:1970px;top:1313px;width:2.4px;height:26.4px;background:#f0f0f0;"></div>
<span class="t" style="left:1999px;top:1310.90px;font-size:28px;line-height:28px;color:#ececec;">@</span>
<div style="left:2144px;top:1305px;width:190px;height:44px;background:transparent;border:2px solid #e07b48;border-radius:22px;box-sizing:border-box;"></div>
<div style="left:2150px;top:1309px;width:88px;height:36px;background:#e07c4a;border-radius:18px;"></div>
<span class="t" style="left:2166.5px;top:1316.85px;font-size:22.5px;line-height:22.5px;color:#f9ddd1;transform:scaleX(1.0940);">Chat</span>
<span class="t" style="left:2270px;top:1316.85px;font-size:22.5px;line-height:22.5px;color:#ececec;transform:scaleX(1.1687);">Act</span>
<svg style="left:2357px;top:1312px;" width="30" height="30" viewBox="0 0 30 30"><path d="M2 2 L28 14.5 L2 27 L4.5 14.5 Z M4.5 14.5 L28 14.5" fill="none" stroke="#5c5c5c" stroke-width="2.2" stroke-linejoin="round"/></svg>
<div style="left:2px;top:1395px;width:68px;height:42px;background:#80baff;"></div>
<svg style="left:26px;top:1403px;" width="22" height="28" viewBox="0 0 22 28"><path d="M2 14 L10 20.5 L2 27 M19 2 L12 8 L19 14" fill="none" stroke="#cfe4ff" stroke-width="2.4"/></svg>
<svg style="left:89px;top:1402px;" width="24" height="30" viewBox="0 0 24 30"><g fill="none" stroke="#f8e0d4" stroke-width="2.2"><circle cx="6" cy="5.5" r="3.6"/><circle cx="18" cy="10.5" r="3.6"/><circle cx="6" cy="24.5" r="3.6"/><path d="M6 9 V21 M18 14 C18 19 6.5 17 6 21"/></g></svg>
<svg style="left:300px;top:1405px;" width="29" height="23" viewBox="0 0 29 23"><g fill="none" stroke="#f8e0d4" stroke-width="2.2"><path d="M5 13 A9.5 9.5 0 0 1 22 7 M23.5 10 A9.5 9.5 0 0 1 6.5 16"/><path d="M1 9.5 L5 13.5 L9.5 10 M27.5 13.5 L23.5 9.5 L19 13"/></g></svg>
<svg style="left:2297px;top:1405px;" width="29" height="23" viewBox="0 0 29 23"><g fill="none" stroke="#f8e0d4" stroke-width="2.2"><path d="M5 13 A9.5 9.5 0 0 1 22 7 M23.5 10 A9.5 9.5 0 0 1 6.5 16"/><path d="M1 9.5 L5 13.5 L9.5 10 M27.5 13.5 L23.5 9.5 L19 13"/></g></svg>
<svg style="left:355px;top:1404px;" width="26" height="26" viewBox="0 0 26 26"><g fill="none" stroke="#f8e0d4" stroke-width="2.2"><circle cx="13" cy="13" r="11.5"/><path d="M8.5 8.5 L17.5 17.5 M17.5 8.5 L8.5 17.5"/></g></svg>
<svg style="left:419px;top:1404px;" width="27" height="24" viewBox="0 0 27 24"><g fill="none" stroke="#f8e0d4" stroke-width="2.2" stroke-linejoin="round"><path d="M13.5 2 L25.5 22 H1.5 Z M13.5 9 V16 M13.5 18 V20.5"/></g></svg>
<svg style="left:497px;top:1404px;" width="28" height="28" viewBox="0 0 28 28"><g fill="none" stroke="#f8e0d4" stroke-width="2.4" stroke-linejoin="round"><path d="M16 2 L26 9 L16 16 V12 C9 12 4 14 2 18 C3 11 8 6.5 16 6 Z"/><circle cx="12" cy="23" r="3.6"/><path d="M5 19 C8 16 16 16 19 19"/></g></svg>
<svg style="left:2436px;top:1404px;" width="24" height="26" viewBox="0 0 24 26"><g fill="none" stroke="#f8e0d4" stroke-width="2.2"><path d="M2 21 H22 M4.5 21 V11 A7.5 7.5 0 0 1 19.5 11 V21 M9.5 22 A2.5 2.5 0 0 0 14.5 22"/></g></svg>
<svg style="left:2491px;top:1406px;" width="26" height="22" viewBox="0 0 26 22"><g fill="none" stroke="#f8e0d4" stroke-width="2"><rect x="2" y="2" width="23" height="18"/><path d="M2 6 H25"/></g></svg>
<span class="t" style="left:128px;top:1406.55px;font-size:22.5px;line-height:22.5px;color:#f5d5c6;transform:scaleX(1.1119);">requirements</span>
<span class="t" style="left:393px;top:1406.55px;font-size:22.5px;line-height:22.5px;color:#f5d5c6;transform:scaleX(1.1186);">0</span>
<span class="t" style="left:459px;top:1406.55px;font-size:22.5px;line-height:22.5px;color:#f5d5c6;transform:scaleX(1.1186);">0</span>
<span class="t" style="left:537px;top:1406.55px;font-size:22.5px;line-height:22.5px;color:#f5d5c6;transform:scaleX(1.0949);">Collaborate</span>
<span class="t" style="left:2338px;top:1406.55px;font-size:22.5px;line-height:22.5px;color:#f5d5c6;transform:scaleX(1.0712);">Castor</span>
<svg style="left:0px;top:0px;pointer-events:none;" width="2547" height="1439" viewBox="0 0 2547 1439"><g fill="none" stroke="#00b050" stroke-linecap="round" stroke-linejoin="round"><path d="M1998.7 890.7 L2328.7 1385.5" stroke-width="18.2"/><path d="M2255.6 1372.3 L2329 1387 L2344.6 1314.5" stroke-width="16.2"/></g></svg>
</body></html>
